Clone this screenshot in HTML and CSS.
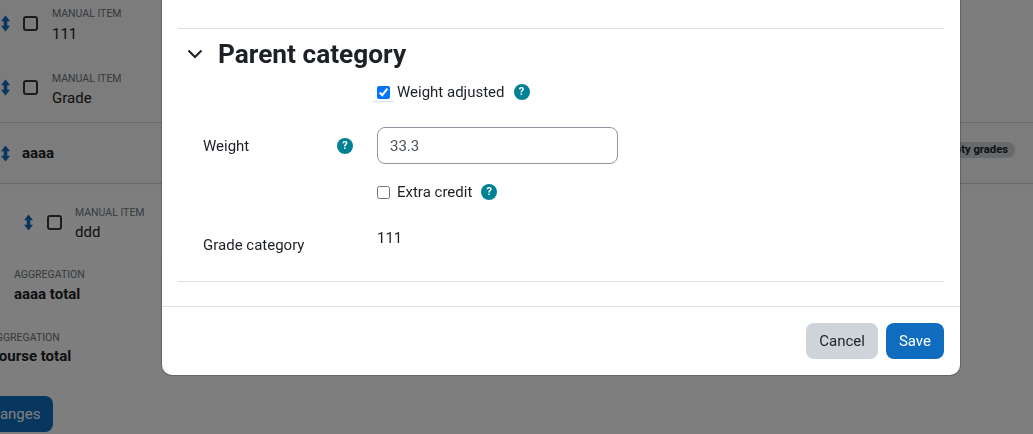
FILE: index.html
```html
<!DOCTYPE html>
<html>
<head>
    <title>Gradebook setup</title>
    <link rel="stylesheet" href="styles.css">
</head>
<body>
    <div class="page">
        <div class="row row-item row-first">
            <svg class="move" viewBox="0 0 10 18"><path d="M5 0 10 6.500H7V11.500h3L5 18 0 11.500h3V6.500H0z"/></svg>
            <span class="box"></span>
            <div class="names"><small>MANUAL ITEM</small><span>111</span></div>
        </div>
        <div class="row row-item row-second">
            <svg class="move" viewBox="0 0 10 18"><path d="M5 0 10 6.500H7V11.500h3L5 18 0 11.500h3V6.500H0z"/></svg>
            <span class="box"></span>
            <div class="names"><small>MANUAL ITEM</small><span>Grade</span></div>
        </div>
        <div class="row row-cat">
            <svg class="move" viewBox="0 0 10 18"><path d="M5 0 10 6.500H7V11.500h3L5 18 0 11.500h3V6.500H0z"/></svg>
            <b>aaaa</b>
            <span class="pill">Empty grades</span>
        </div>
        <div class="row-gap">
            <div class="row row-item row-nested">
                <svg class="move" viewBox="0 0 10 18"><path d="M5 0 10 6.500H7V11.500h3L5 18 0 11.500h3V6.500H0z"/></svg>
                <span class="box"></span>
                <div class="names"><small>MANUAL ITEM</small><span>ddd</span></div>
            </div>
        </div>
        <div class="row row-total">
            <div class="names"><small>AGGREGATION</small><b>aaaa total</b></div>
        </div>
        <div class="row row-course">
            <div class="names"><small>AGGREGATION</small><b>Course total</b></div>
        </div>
        <button class="save-changes">Save changes</button>
    </div>

    <div class="backdrop"></div>

    <div class="modal">
        <div class="modal-body">
            <div class="section-head">
                <svg class="chevron" viewBox="0 0 16 10"><path d="M1.500 1.500 8 8l6.500-6.500"/></svg>
                <h3>Parent category</h3>
            </div>
            <div class="field field-adjusted">
                <div class="label"></div>
                <label class="check">
                    <span class="ticked"><input type="checkbox" checked></span>
                    Weight adjusted
                    <span class="help">?</span>
                </label>
            </div>
            <div class="field field-weight">
                <div class="label">Weight <span class="help">?</span></div>
                <input class="text" type="text" value="33.3">
            </div>
            <div class="field field-extra">
                <div class="label"></div>
                <label class="check">
                    <input type="checkbox">
                    Extra credit
                    <span class="help">?</span>
                </label>
            </div>
            <div class="field field-category">
                <div class="label">Grade category</div>
                <div class="static">111</div>
            </div>
        </div>
        <div class="modal-footer">
            <button class="btn btn-cancel">Cancel</button>
            <button class="btn btn-save">Save</button>
        </div>
    </div>
</body>
</html>
```

FILE: styles.css
```css
html, body {
    margin: 0;
    height: 100%;
    overflow: hidden;
}
body {
    font-family: Roboto, 'Liberation Sans', sans-serif;
    font-size: 15px;
    color: #1d2125;
    background: #fcfcfc;
}

/* gradebook behind the dialog */
.page {
    margin-top: -6px;
}
.row {
    display: flex;
    align-items: center;
    box-sizing: border-box;
    padding-right: 18px;
}
.row-item {
    padding-left: 1px;
    padding-bottom: 6px;
    background: #f8f9fa;
}
.row-first {
    height: 65px;
}
.row-second {
    height: 64px;
    border-bottom: 1px solid #ced4da;
}
.row-cat {
    height: 61px;
    padding-left: 1px;
    border-bottom: 1px solid #ced4da;
    background: #f8f9fa;
}
.row-gap {
    padding-top: 9px;
    background: #f8f9fa;
}
.row-nested {
    height: 62px;
    padding-left: 24px;
    padding-bottom: 4px;
    background: #fff;
}
.row-total {
    height: 62px;
    padding-left: 14px;
}
.row-course {
    height: 64px;
    margin-left: -11px;
}
.move {
    width: 9px;
    height: 17px;
    fill: #0f6cbf;
    flex: none;
}
.box {
    width: 11px;
    height: 11px;
    margin-left: 13px;
    border: 2px solid #343a40;
    border-radius: 3px;
    flex: none;
}
.names {
    display: flex;
    flex-direction: column;
    margin-left: 14px;
    padding-top: 4px;
}
.row-nested .box {
    margin-left: 14px;
}
.row-nested .names {
    margin-left: 13px;
    padding-top: 5px;
}
.row-total .names, .row-course .names {
    margin-left: 0;
    padding-top: 0;
}
.names small {
    font-size: 10.500px;
    line-height: 16px;
    color: #6a737b;
}
.names span {
    line-height: 24px;
}
.names b {
    line-height: 24px;
}
.row-total small, .row-second small {
    margin: 1px 0 -1px;
}
.row-course small, .row-nested small {
    margin-bottom: -1px;
}
.row-course small {
    margin-bottom: -2px;
}
.row-cat b {
    margin-left: 12px;
}
.pill {
    margin-left: auto;
    margin-bottom: 6px;
    padding: 0 7px;
    font-size: 11.250px;
    font-weight: bold;
    line-height: 16px;
    border-radius: 8px;
    background: #ced4da;
}
.save-changes {
    display: block;
    margin: 15px 0 0 -65px;
    height: 36px;
    padding: 0 13px;
    font: 15px Roboto, sans-serif;
    color: #fff;
    background: #0f6cbf;
    border: none;
    border-radius: 8px;
}

/* dialog */
.backdrop {
    position: fixed;
    inset: 0;
    background: rgba(0, 0, 0, 0.5);
}
.modal {
    position: fixed;
    left: 162px;
    top: -1px;
    width: 798px;
    height: 376px;
    display: flex;
    flex-direction: column;
    background: #fff;
    border-radius: 0 0 10px 10px;
    box-shadow: 0 0 0 1px rgba(0, 0, 0, 0.2);
}
.modal-body {
    flex: 1;
    margin: 29px 16px 24px;
    border-top: 1px solid #dee2e6;
    border-bottom: 1px solid #dee2e6;
}
.section-head {
    display: flex;
    align-items: center;
    height: 50px;
    padding-left: 9px;
}
.chevron {
    width: 16px;
    height: 10px;
    fill: none;
    stroke: #1d2125;
    stroke-width: 2;
}
h3 {
    margin: 0 0 0 15px;
    font-size: 26.250px;
    font-weight: bold;
}
.field {
    display: flex;
}
.label {
    width: 199px;
    padding-left: 25px;
    box-sizing: border-box;
    display: flex;
    align-items: center;
    justify-content: space-between;
    padding-right: 24px;
}
.check {
    display: flex;
    align-items: center;
}
.check input {
    width: 13px;
    height: 13px;
    margin: 0 7px 0 0;
}
.ticked {
    position: relative;
}
.ticked input {
    display: block;
    accent-color: #0075ff;
}
/* leftover focus line under the ticked box */
.ticked::after {
    content: '';
    position: absolute;
    left: -4px;
    bottom: -3px;
    width: 21px;
    height: 1px;
    background: #cfe2f3;
}
.help {
    width: 16px;
    height: 16px;
    margin-left: 9px;
    border-radius: 50%;
    background: #008196;
    color: #fff;
    font-size: 11px;
    font-weight: bold;
    line-height: 16px;
    text-align: center;
}
.field-adjusted {
    height: 24px;
    margin-top: 1px;
}
.field-weight {
    margin-top: 23px;
    height: 37px;
}
.text {
    width: 241px;
    height: 37px;
    box-sizing: border-box;
    padding: 0 12px;
    border: 1px solid #8f959e;
    border-radius: 8px;
    font: 15px Roboto, sans-serif;
    color: #495057;
}
.field-extra {
    margin-top: 16px;
    height: 24px;
}
.field-category {
    margin-top: 22px;
    height: 28px;
}
.static {
    line-height: 24px;
}
.field-category .label {
    padding-top: 9px;
}
.modal-footer {
    height: 69px;
    box-sizing: border-box;
    border-top: 1px solid #dee2e6;
    display: flex;
    justify-content: flex-end;
    align-items: center;
    gap: 8px;
    padding: 0 16px;
}
.btn {
    height: 36px;
    padding: 0 13px;
    border: none;
    border-radius: 8px;
    font: 15px Roboto, sans-serif;
}
.btn-cancel {
    background: #ced4da;
    color: #1d2125;
}
.btn-save {
    background: #0f6cbf;
    color: #fff;
}
```
